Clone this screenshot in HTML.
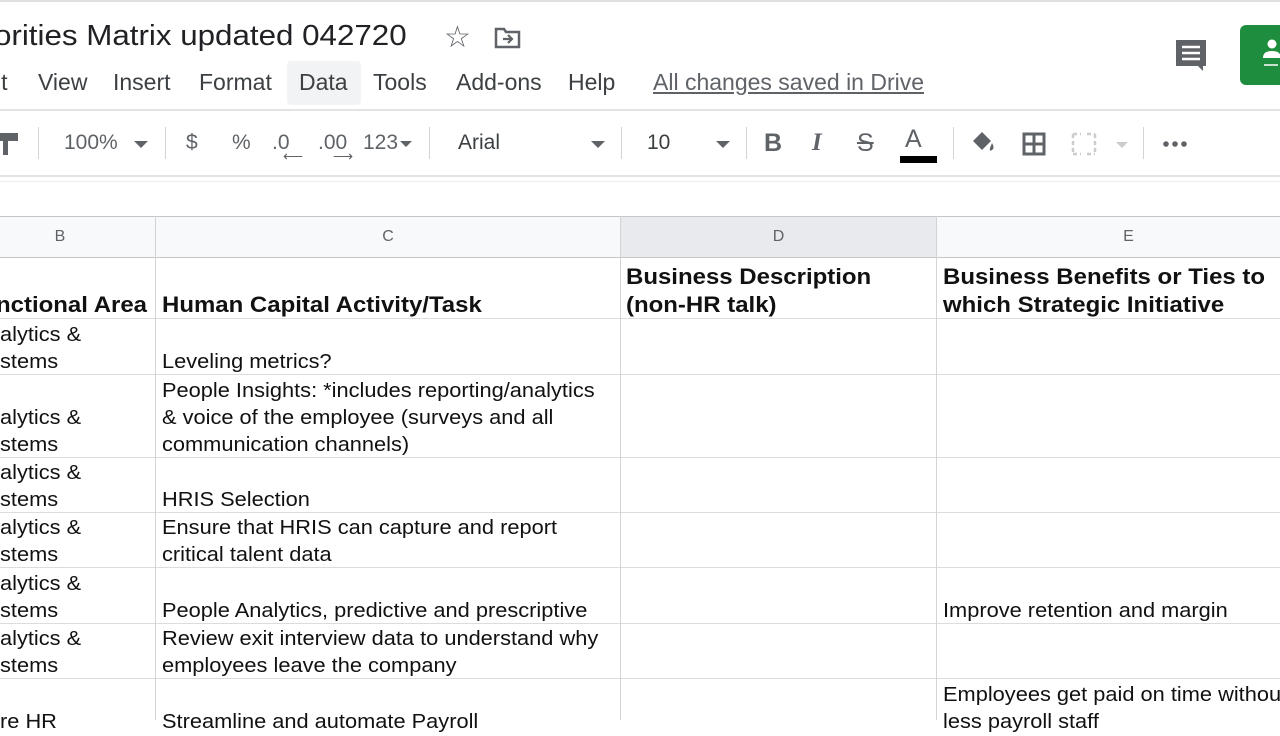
<!DOCTYPE html>
<html><head><style>
body{margin:0;width:1280px;height:720px;overflow:hidden;background:#fff;font-family:"Liberation Sans",Arial,sans-serif;position:relative}
.a{position:absolute;white-space:nowrap}
.t{font-size:29px;color:#202124;top:20px;transform:scaleX(1.08);transform-origin:left}
.m{font-size:23px;color:#3c4043;top:69px}
.tb{font-size:21px;color:#5f6368;top:131px}
.h{position:absolute;left:0;right:0;height:1px;background:#dadce0}
.v{position:absolute;width:1px;background:#d4d4d4}
.c{position:absolute;font-size:20px;color:#111;line-height:27px;white-space:nowrap;transform:scaleX(1.09);transform-origin:left}
.b{font-weight:bold;font-size:22px;line-height:28px}
.col{position:absolute;top:216px;height:41px;line-height:41px;text-align:center;font-size:16px;color:#5f6368}
</style></head><body>
<div class="h" style="top:0;height:2px;background:#e0e0e0"></div>
<div class="a t" style="left:-6px">orities Matrix updated 042720</div>
<div class="a" style="left:444px;top:20px;font-size:30px;color:#5f6368">☆</div>
<svg class="a" style="left:494px;top:26px" width="28" height="24" viewBox="0 0 28 24"><path d="M2 3h8l2 3h13v15H2z" fill="none" stroke="#5f6368" stroke-width="2.5"/><path d="M9 13h9M14 9l4 4-4 4" fill="none" stroke="#5f6368" stroke-width="2.2"/></svg>
<div class="a m" style="left:-4px">it</div>
<div class="a m" style="left:38px">View</div>
<div class="a m" style="left:113px">Insert</div>
<div class="a m" style="left:199px">Format</div>
<div class="a" style="left:287px;top:61px;width:74px;height:44px;background:#f1f3f4;border-radius:4px"></div>
<div class="a m" style="left:299px">Data</div>
<div class="a m" style="left:373px">Tools</div>
<div class="a m" style="left:456px">Add-ons</div>
<div class="a m" style="left:568px">Help</div>
<div class="a m" style="left:653px;color:#5f6368;text-decoration:underline">All changes saved in Drive</div>
<svg class="a" style="left:1174px;top:38px" width="34" height="34" viewBox="0 0 34 34"><path d="M2 2h30v26H29v5l-5-5H2z" fill="#5f6368"/><path d="M8 9h18M8 15h18M8 21h18" stroke="#fff" stroke-width="2.6"/></svg>
<div class="a" style="left:1240px;top:25px;width:60px;height:60px;background:#1e8e3e;border-radius:6px"></div>
<svg class="a" style="left:1260px;top:38px" width="20" height="34"><circle cx="12" cy="6" r="4.5" fill="#fff"/><path d="M3 20q0-7 9-7t9 7z" fill="#fff"/><path d="M4 27h14" stroke="#fff" stroke-width="1.5"/></svg>
<div class="h" style="top:109px;height:2px;background:#e3e3e3"></div>
<svg class="a" style="left:0;top:131px" width="22" height="26"><path d="M0 2h18v8H8v14H3V10H0" fill="#5f6368"/></svg>
<div class="v" style="left:38px;top:127px;height:32px"></div>
<div class="a tb" style="left:64px">100%</div>
<div class="a" style="left:134px;top:141px;border:7px solid transparent;border-top-color:#5f6368"></div>
<div class="v" style="left:165px;top:127px;height:32px"></div>
<div class="a tb" style="left:186px">$</div>
<div class="a tb" style="left:232px">%</div>
<div class="a tb" style="left:272px">.0</div>
<div class="a" style="left:283px;top:148px;font-size:14px;color:#5f6368">⟵</div>
<div class="a tb" style="left:318px">.00</div>
<div class="a" style="left:333px;top:148px;font-size:14px;color:#5f6368">⟶</div>
<div class="a tb" style="left:363px">123</div>
<div class="a" style="left:400px;top:141px;border:6px solid transparent;border-top-color:#5f6368"></div>
<div class="v" style="left:429px;top:127px;height:32px"></div>
<div class="a tb" style="left:458px;color:#3c4043">Arial</div>
<div class="a" style="left:591px;top:141px;border:7px solid transparent;border-top-color:#5f6368"></div>
<div class="v" style="left:621px;top:127px;height:32px"></div>
<div class="a tb" style="left:647px;color:#3c4043">10</div>
<div class="a" style="left:716px;top:141px;border:7px solid transparent;border-top-color:#5f6368"></div>
<div class="v" style="left:746px;top:127px;height:32px"></div>
<div class="a" style="left:764px;top:129px;font-size:25px;font-weight:bold;color:#5f6368">B</div>
<div class="a" style="left:812px;top:129px;font-size:25px;font-style:italic;font-family:'Liberation Serif',serif;font-weight:bold;color:#5f6368">I</div>
<div class="a" style="left:857px;top:129px;font-size:25px;color:#5f6368;text-decoration:line-through">S</div>
<div class="a" style="left:905px;top:125px;font-size:25px;color:#5f6368">A</div>
<div class="a" style="left:900px;top:156px;width:37px;height:7px;background:#000"></div>
<div class="v" style="left:953px;top:127px;height:32px"></div>
<svg class="a" style="left:970px;top:129px" width="28" height="26"><path d="M3 12l9-9 9 9-9 9z" fill="#5f6368"/><path d="M22 14q3 5 0 7t-2-2z" fill="#5f6368"/></svg>
<svg class="a" style="left:1022px;top:132px" width="24" height="24"><path d="M2 2h20v20H2zM12 2v20M2 12h20" fill="none" stroke="#5f6368" stroke-width="3"/></svg>
<svg class="a" style="left:1071px;top:132px" width="60" height="24"><path d="M2 2h8M2 22h8M16 2h8M16 22h8M2 2v20M24 2v20" stroke="#ccc" stroke-width="2.5" fill="none" stroke-dasharray="4 3"/><path d="M45 10l6 6 6-6z" fill="#ccc"/></svg>
<div class="v" style="left:1143px;top:127px;height:32px"></div>
<svg class="a" style="left:1162px;top:140px" width="28" height="8"><circle cx="4" cy="4" r="2.8" fill="#5f6368"/><circle cx="13" cy="4" r="2.8" fill="#5f6368"/><circle cx="22" cy="4" r="2.8" fill="#5f6368"/></svg>
<div class="h" style="top:175px;height:2px;background:#e3e3e3"></div>
<div class="h" style="top:181px;background:#eee"></div>
<div class="h" style="top:216px;background:#c6c6c6"></div>
<div class="a" style="left:0;top:217px;width:1280px;height:40px;background:#f8f9fa"></div>
<div class="a" style="left:621px;top:217px;width:315px;height:40px;background:#e8eaed"></div>
<div class="col" style="left:0;width:120px">B</div>
<div class="col" style="left:156px;width:464px">C</div>
<div class="col" style="left:620px;width:317px">D</div>
<div class="col" style="left:937px;width:383px">E</div>
<div class="h" style="top:257px;background:#c6c6c6"></div>
<div class="h" style="top:318px"></div>
<div class="h" style="top:374px"></div>
<div class="h" style="top:457px"></div>
<div class="h" style="top:512px"></div>
<div class="h" style="top:567px"></div>
<div class="h" style="top:623px"></div>
<div class="h" style="top:678px"></div>
<div class="v" style="left:155px;top:216px;height:504px"></div>
<div class="v" style="left:620px;top:216px;height:504px"></div>
<div class="v" style="left:936px;top:216px;height:504px"></div>
<div class="c b" style="left:-4px;top:291px">nctional Area</div>
<div class="c b" style="left:162px;top:291px">Human Capital Activity/Task</div>
<div class="c b" style="left:626px;top:263px">Business Description<br>(non-HR talk)</div>
<div class="c b" style="left:943px;top:263px">Business Benefits or Ties to<br>which Strategic Initiative</div>
<div class="c" style="left:0;top:322px">alytics &amp;<br>stems</div>
<div class="c" style="left:162px;top:349px">Leveling metrics?</div>
<div class="c" style="left:0;top:405px">alytics &amp;<br>stems</div>
<div class="c" style="left:162px;top:378px">People Insights: *includes reporting/analytics<br>&amp; voice of the employee (surveys and all<br>communication channels)</div>
<div class="c" style="left:0;top:460px">alytics &amp;<br>stems</div>
<div class="c" style="left:162px;top:487px">HRIS Selection</div>
<div class="c" style="left:0;top:515px">alytics &amp;<br>stems</div>
<div class="c" style="left:162px;top:515px">Ensure that HRIS can capture and report<br>critical talent data</div>
<div class="c" style="left:0;top:571px">alytics &amp;<br>stems</div>
<div class="c" style="left:162px;top:598px">People Analytics, predictive and prescriptive</div>
<div class="c" style="left:943px;top:598px">Improve retention and margin</div>
<div class="c" style="left:0;top:626px">alytics &amp;<br>stems</div>
<div class="c" style="left:162px;top:626px">Review exit interview data to understand why<br>employees leave the company</div>
<div class="c" style="left:0;top:709px">re HR</div>
<div class="c" style="left:162px;top:709px">Streamline and automate Payroll</div>
<div class="c" style="left:943px;top:682px">Employees get paid on time without<br>less payroll staff</div>
</body></html>
